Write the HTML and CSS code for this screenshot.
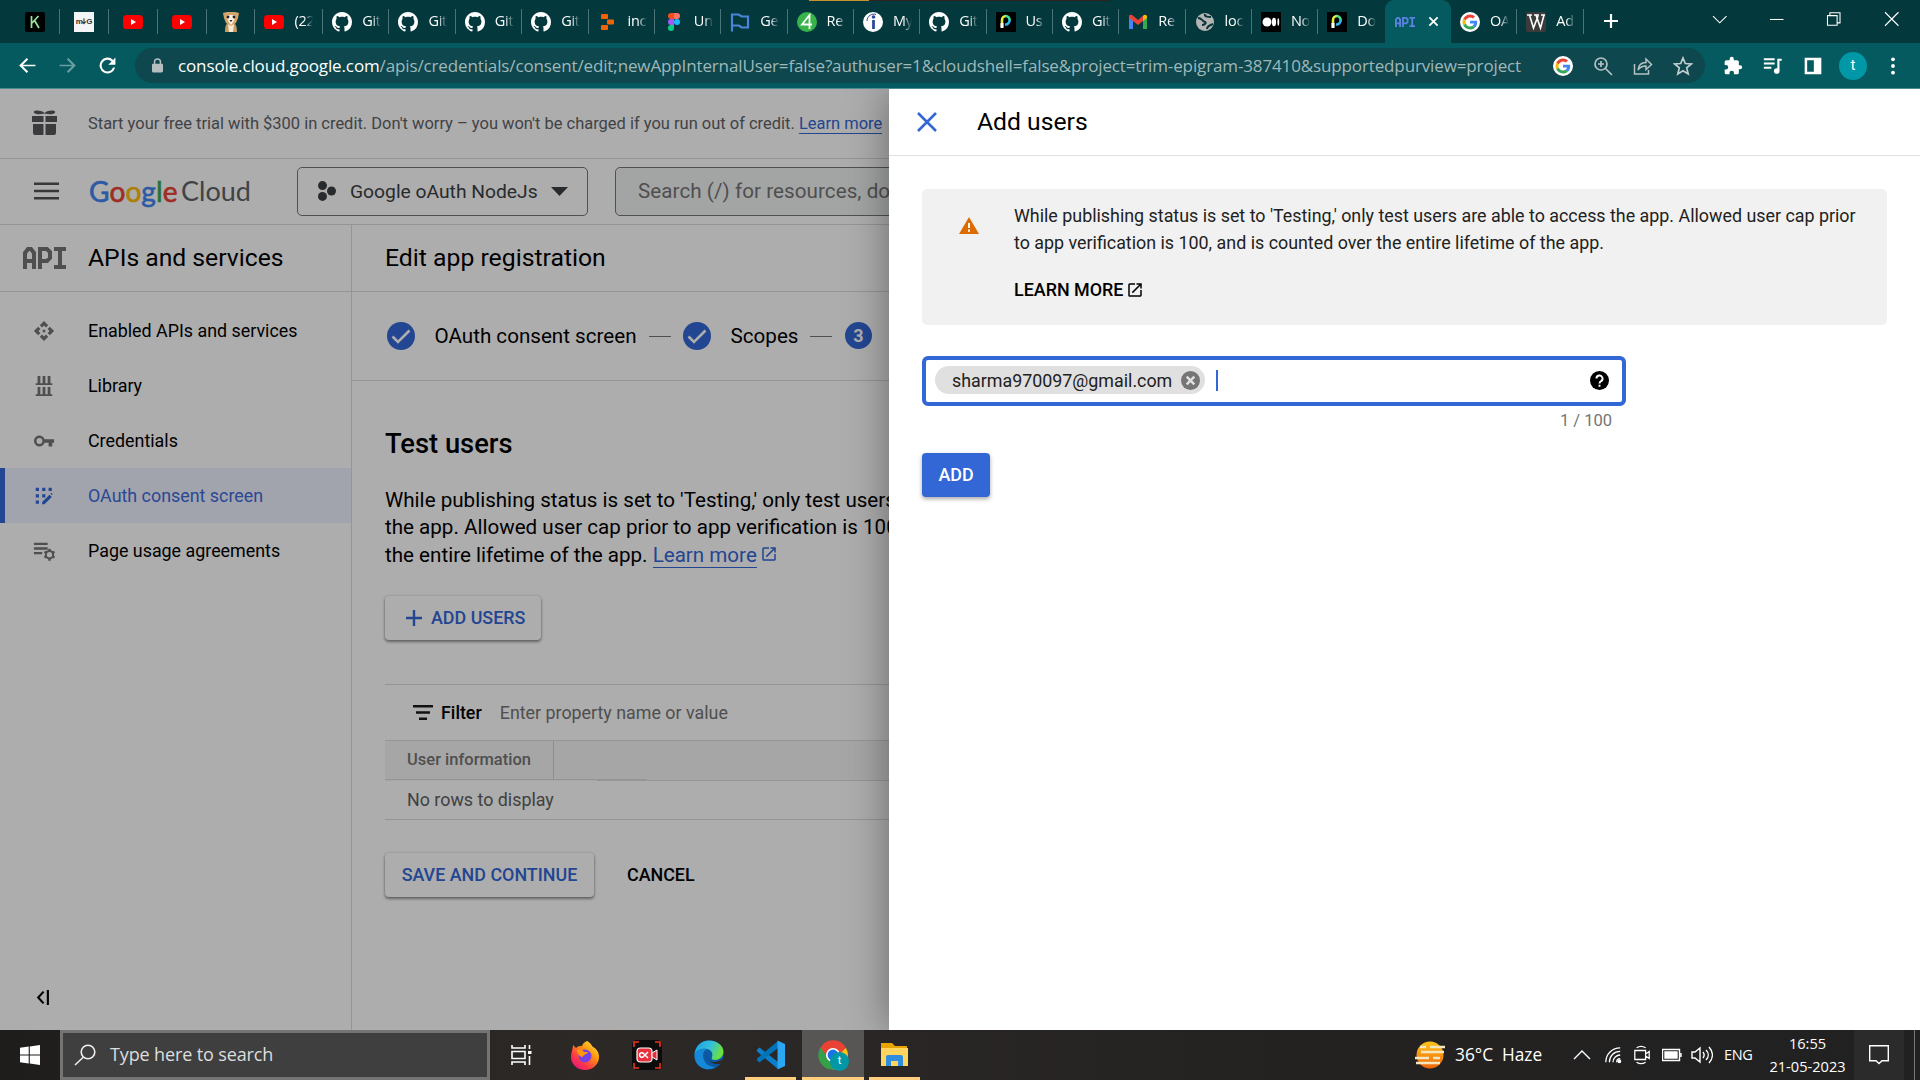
FILE: index.html
```html
<!DOCTYPE html>
<html lang="en">
<head>
<meta charset="utf-8">
<title>Edit app registration – Google Cloud console</title>
<link rel="stylesheet" href="styles.css">
</head>
<body>
<svg class="defs" aria-hidden="true">
  <symbol id="yt" viewBox="0 0 20 20"><rect y="3" width="20" height="14" rx="3.6" fill="#f00"/><path d="M8 7l5 3-5 3z" fill="#fff"/></symbol>
  <symbol id="gh" viewBox="0 0 16 16"><path fill="#fff" d="M8 0C3.58 0 0 3.58 0 8c0 3.54 2.29 6.53 5.47 7.59.4.07.55-.17.55-.38 0-.19-.01-.82-.01-1.49-2.01.37-2.53-.49-2.69-.94-.09-.23-.48-.94-.82-1.13-.28-.15-.68-.52-.01-.53.63-.01 1.08.58 1.23.82.72 1.21 1.87.87 2.33.66.07-.52.28-.87.51-1.07-1.78-.2-3.64-.89-3.64-3.95 0-.87.31-1.59.82-2.15-.08-.2-.36-1.02.08-2.12 0 0 .67-.21 2.2.82.64-.18 1.32-.27 2-.27s1.36.09 2 .27c1.53-1.04 2.2-.82 2.2-.82.44 1.1.16 1.92.08 2.12.51.56.82 1.27.82 2.15 0 3.07-1.87 3.75-3.65 3.95.29.25.54.73.54 1.48 0 1.07-.01 1.93-.01 2.2 0 .21.15.46.55.38A8.01 8.01 0 0016 8c0-4.42-3.58-8-8-8z"/></symbol>
  <symbol id="goog" viewBox="0 0 48 48"><circle cx="24" cy="24" r="24" fill="#fff"/><g transform="translate(6 6) scale(.75)"><path fill="#ea4335" d="M24 9.500c3.540 0 6.710 1.220 9.210 3.600l6.850-6.850C35.900 2.380 30.470 0 24 0 14.620 0 6.510 5.380 2.560 13.220l7.980 6.190C12.430 13.720 17.740 9.500 24 9.500z"/><path fill="#4285f4" d="M46.980 24.550c0-1.570-.15-3.090-.38-4.550H24v9.020h12.940c-.58 2.960-2.260 5.480-4.780 7.180l7.730 6c4.510-4.180 7.090-10.360 7.090-17.650z"/><path fill="#fbbc05" d="M10.530 28.590c-.48-1.450-.76-2.990-.76-4.590s.27-3.140.76-4.590l-7.980-6.190C.92 16.460 0 20.120 0 24c0 3.880.92 7.540 2.560 10.780z"/><path fill="#34a853" d="M24 48c6.480 0 11.930-2.130 15.890-5.810l-7.730-6c-2.150 1.450-4.920 2.300-8.160 2.300-6.260 0-11.570-4.220-13.470-9.910l-7.980 6.190C6.510 42.620 14.620 48 24 48z"/></g></symbol>
  <symbol id="pdev" viewBox="0 0 20 20"><rect width="20" height="20" fill="#000"/><path d="M6 15V8a4 4 0 0 1 4-4" fill="none" stroke="#e9ec3c" stroke-width="2.600"/><path d="M9.500 4a4 4 0 0 1 4 5" fill="none" stroke="#3fe0a0" stroke-width="2.600"/><path d="M13.500 8a4 4 0 0 1-4.500 4.500" fill="none" stroke="#2fb8f0" stroke-width="2.600"/><path d="M6 11v5" stroke="#fff" stroke-width="3"/></symbol>
  <symbol id="open" viewBox="0 0 24 24"><path d="M19 19H5V5h7V3H5a2 2 0 0 0-2 2v14a2 2 0 0 0 2 2h14c1.100 0 2-.9 2-2v-7h-2v7zM14 3v2h3.590l-9.830 9.830 1.410 1.410L19 6.410V10h2V3h-7z"/></symbol>
  <symbol id="apilogo" viewBox="0 0 43 22"><g fill="none" stroke="currentColor" stroke-width="4"><path d="M2 22V6l3-4h3l3 4v16M2 14h9M17 22V2h7l3 3v6l-3 3h-7M31 2h12M31 20h12M37 2v18"/></g></symbol>
  <symbol id="done" viewBox="0 0 28 28"><circle cx="14" cy="14" r="14" fill="#3367d6"/><path d="M5.500 14.500l5.500 5.500L22.500 8.500" fill="none" stroke="#fff" stroke-width="2.600"/></symbol>
</svg>

<header class="browser">
  <div class="tabstrip">
    <div class="window-edge"></div>
    <div class="tab pinned"><svg viewBox="0 0 20 20"><rect width="20" height="20" rx="2" fill="#000"/><path d="M6.500 4v12M13.500 4l-6.500 7M9.500 8.500l4.500 7.500" stroke="#9be59b" stroke-width="1.700" fill="none"/></svg></div>
    <div class="tab pinned"><span class="mg">m<svg viewBox="0 0 5 8"><path d="M2.500 0v6M.3 4l2.200 2.600L4.700 4" fill="none" stroke="#333" stroke-width="1.300"/></svg>G</span></div>
    <div class="tab pinned"><svg><use href="#yt"/></svg></div>
    <div class="tab pinned"><svg><use href="#yt"/></svg></div>
    <div class="tab pinned"><svg viewBox="0 0 20 20"><path d="M4 20c0-6 1-8 3-9h6c2 1 3 4 3 9z" fill="#c79a63"/><path d="M7 12h6l-1 8H8z" fill="#f4ead6"/><path d="M2 1l4-1h8l4 1-1 5-2 5-5 3-5-3-2-5z" fill="#d5a66b"/><path d="M6 3h8l-1 6-3 4-3-4z" fill="#f7efe0"/><circle cx="7" cy="5" r="1.400" fill="#222"/><circle cx="13" cy="5" r="1.400" fill="#222"/><path d="M8.500 8h3L10 10z" fill="#222"/></svg></div>
    <div class="tab first"><svg><use href="#yt"/></svg><span>(22</span></div>
    <div class="tab"><svg><use href="#gh"/></svg><span>Git</span></div>
    <div class="tab"><svg><use href="#gh"/></svg><span>Git</span></div>
    <div class="tab"><svg><use href="#gh"/></svg><span>Git</span></div>
    <div class="tab"><svg><use href="#gh"/></svg><span>Git</span></div>
    <div class="tab"><svg viewBox="0 0 20 20"><g fill="#f26207"><rect x="3" y="2" width="7" height="5" rx="1"/><rect x="9" y="7.500" width="7" height="5" rx="1"/><rect x="3" y="13" width="7" height="5" rx="1"/></g></svg><span>inc</span></div>
    <div class="tab"><svg viewBox="0 0 20 20"><path d="M4 4a3 3 0 0 1 3-3h3v6H7a3 3 0 0 1-3-3z" fill="#f24e1e"/><path d="M10 1h3a3 3 0 0 1 0 6h-3z" fill="#ff7262"/><path d="M7 7h3v6H7a3 3 0 0 1 0-6z" fill="#a259ff"/><circle cx="13" cy="10" r="3" fill="#1abcfe"/><path d="M7 13h3v3a3 3 0 1 1-3-3z" fill="#0acf83"/></svg><span>Un</span></div>
    <div class="tab"><svg viewBox="0 0 20 20"><path d="M2 19.500V2.500h6c2 0 2 2 4.500 2H18v11h-5.500c-2 0-2-2-4.500-2H2" fill="none" stroke="#4b84d6" stroke-width="2.200"/></svg><span>Ge</span></div>
    <div class="tab"><svg viewBox="0 0 20 20"><circle cx="10" cy="10" r="10" fill="#37b34a"/><path d="M12.500 17V3L5 12.500h10" fill="none" stroke="#fff" stroke-width="1.800"/></svg><span>Re</span></div>
    <div class="tab"><svg viewBox="0 0 20 20"><circle cx="10" cy="10" r="10" fill="#fff"/><circle cx="10.500" cy="5" r="1.800" fill="#2b4a9b"/><path d="M10.500 8v9" stroke="#2b4a9b" stroke-width="2.800"/><path d="M4 9c0-5 5-8 9-6.500" stroke="#2b4a9b" fill="none"/></svg><span>My</span></div>
    <div class="tab"><svg><use href="#gh"/></svg><span>Git</span></div>
    <div class="tab"><svg><use href="#pdev"/></svg><span>Us</span></div>
    <div class="tab"><svg><use href="#gh"/></svg><span>Git</span></div>
    <div class="tab"><svg viewBox="0 0 20 20"><path d="M1 4v13h4V8" fill="#4285f4"/><path d="M15 8v9h4V4" fill="#34a853"/><path d="M1 4c1-2 3-1 4-.3L10 8l5-4.300V9l-5 4-5-4-4-3z" fill="#ea4335"/><path d="M15 3.700C17 2 19 3 19 5v1l-4 3z" fill="#fbbc04"/></svg><span>Re</span></div>
    <div class="tab"><svg viewBox="0 0 20 20"><circle cx="10" cy="10" r="9" fill="#b4b4b4"/><path d="M3 6c4 0 4 3 7 4 2 1-1 3-3 3M10 2c-1 3 4 3 6 3M12 17c0-3 3-4 6-5" stroke="#06363b" stroke-width="2" fill="none"/></svg><span>loc</span></div>
    <div class="tab"><svg viewBox="0 0 20 20"><rect width="20" height="20" rx="1" fill="#000"/><circle cx="6" cy="10" r="4.500" fill="#fff"/><ellipse cx="13" cy="10" rx="2.100" ry="4.300" fill="#fff"/><ellipse cx="17.300" cy="10" rx=".9" ry="3.800" fill="#fff"/></svg><span>No</span></div>
    <div class="tab before"><svg><use href="#pdev"/></svg><span>Do</span></div>
    <div class="tab active"><svg><use href="#apilogo"/></svg><svg class="close" viewBox="0 0 12 12"><path d="M1.500 1.500l9 9M10.500 1.500l-9 9" stroke="#fff" stroke-width="2"/></svg></div>
    <div class="tab"><svg><use href="#goog"/></svg><span>OA</span></div>
    <div class="tab"><svg viewBox="0 0 20 20"><rect width="20" height="20" rx="2" fill="#3b3b3b"/><path d="M1 3h5M8 3h5M15 3h4M3.500 3l4 13L12 4M10 3l4.500 13L18 3" fill="none" stroke="#fff" stroke-width="1.600"/></svg><span>Ad</span></div>
    <svg class="newtab" viewBox="0 0 16 16"><path d="M8 1v14M1 8h14" stroke="#fff" stroke-width="2.200"/></svg>
    <div class="winctl">
      <svg viewBox="0 0 14 14"><path d="M0 4l7 7 7-7"/></svg>
      <svg viewBox="0 0 14 14"><path d="M0 7.500h14"/></svg>
      <svg viewBox="0 0 14 14"><path d="M.5 3.500h10v10h-10zM3 3V.5h10.500v10.500H11"/></svg>
      <svg viewBox="0 0 14 14"><path d="M0 0l14 14M14 0L0 14"/></svg>
    </div>
  </div>
  <div class="toolbar">
    <svg class="nav" viewBox="0 0 24 24"><path fill="#fff" d="M22 10.900H6.200l6.600-6.600L11 2.600 1.500 12 11 21.400l1.800-1.700-6.600-6.600H22z"/></svg>
    <svg class="nav" viewBox="0 0 24 24"><path fill="#6a9fa2" d="M2 10.900h15.800l-6.600-6.600L13 2.600 22.500 12 13 21.400l-1.800-1.700 6.600-6.600H2z"/></svg>
    <svg class="nav" viewBox="0 0 24 24"><path fill="#fff" d="M19.100 4.900A10 10 0 1 0 21.700 14.600h-2.700A7.400 7.400 0 1 1 17.200 6.800L13 11h9V2z"/></svg>
    <div class="omnibox">
      <svg class="lock" viewBox="0 0 12 16"><path fill="#b6bec0" d="M10.500 6H10V4a4 4 0 0 0-8 0v2h-.5A1.300 1.300 0 0 0 0 7.300v6.900A1.500 1.500 0 0 0 1.500 15.500h9a1.500 1.500 0 0 0 1.500-1.500V7.300A1.300 1.300 0 0 0 10.500 6zM3.600 6V4a2.400 2.400 0 0 1 4.800 0v2z"/></svg>
      <div class="url"><span>console.cloud.google.com</span><span class="path">/apis/credentials/consent/edit;newAppInternalUser=false?authuser=1&amp;cloudshell=false&amp;project=trim-epigram-387410&amp;supportedpurview=project</span></div>
      <div class="omni-icons">
        <svg><use href="#goog"/></svg>
        <svg viewBox="0 0 20 20"><g fill="none" stroke="#b5c1c3" stroke-width="1.700"><circle cx="8" cy="8" r="6"/><path d="M12.500 12.500L19 19M8 5v6M5 8h6"/></g></svg>
        <svg viewBox="0 0 20 20"><path d="M1.500 8v10h14v-4M5 14c.5-5 3-7.500 8-7.500V3l5.500 5.500-5.500 5V10c-4 0-6 1-8 4z" fill="none" stroke="#b5c1c3" stroke-width="1.500"/></svg>
        <svg viewBox="0 0 20 20"><path d="M10 2l2.300 5.500 6 .5-4.600 3.900L15.200 18 10 14.700 4.800 18l1.500-6.100L1.700 8l6-.5z" fill="none" stroke="#c3cdce" stroke-width="1.700"/></svg>
      </div>
    </div>
    <div class="ext">
      <svg viewBox="0 0 24 24"><path fill="#fff" d="M20.500 11H19V7a2 2 0 0 0-2-2h-4V3.500a2.500 2.500 0 0 0-5 0V5H4a2 2 0 0 0-2 2v3.800h1.500a2.700 2.700 0 0 1 0 5.400H2V20a2 2 0 0 0 2 2h3.800v-1.500a2.700 2.700 0 0 1 5.400 0V22H17a2 2 0 0 0 2-2v-4h1.500a2.500 2.500 0 0 0 0-5z"/></svg>
      <svg viewBox="0 0 24 24"><path d="M1 4h13M1 9h13M1 14h9" stroke="#fff" stroke-width="2.400"/><path d="M22.500 4.500h-4V17" stroke="#fff" stroke-width="2.600" fill="none"/><circle cx="16.500" cy="18" r="3.400" fill="#fff"/></svg>
      <svg viewBox="0 0 24 24"><path d="M2 2h20v20H2zM5 5v14h8V5z" fill="#fff" fill-rule="evenodd"/></svg>
      <span class="avatar">t</span>
      <svg viewBox="0 0 24 24"><g fill="#fff"><circle cx="12" cy="4" r="2.300"/><circle cx="12" cy="12" r="2.300"/><circle cx="12" cy="20" r="2.300"/></g></svg>
    </div>
  </div>
</header>

<main class="viewport">
  <div class="console">
    <div class="promo">
      <svg class="gift" viewBox="0 0 25 25"><g fill="#57585a"><path d="M0 6h11.500v6H0zM13.500 6H25v6H13.500zM1 14h10.500v11H3a2 2 0 0 1-2-2zM13.500 14H24v9a2 2 0 0 1-2 2h-8.500z"/><path d="M12.500 3C9 0 3 0 2 1.500 1 4 6 5 12.500 3.500 19 5 24 4 23 1.500 22 0 16 0 12.500 3z"/></g></svg>
      <p>Start your free trial with $300 in credit. Don't worry – you won't be charged if you run out of credit. <a>Learn more</a></p>
    </div>
    <div class="topbar">
      <svg class="burger" viewBox="0 0 26 18"><path d="M0 1.500h26M0 9h26M0 16.500h26" stroke="#505356" stroke-width="2.600"/></svg>
      <div class="logo"><span class="word"><i class="b">G</i><i class="r">o</i><i class="y">o</i><i class="b">g</i><i class="g">l</i><i class="r">e</i></span><span class="cloud">Cloud</span></div>
      <div class="project">
        <svg class="hex" viewBox="0 0 18 20"><g fill="#3c4043"><circle cx="4.500" cy="4.600" r="4.500"/><circle cx="13.500" cy="10" r="4.500"/><circle cx="4.500" cy="15.400" r="4.500"/></g></svg>
        <span>Google oAuth NodeJs</span>
        <svg class="caret" viewBox="0 0 17 9"><path d="M0 0h17L8.500 9z" fill="#3c4043"/></svg>
      </div>
      <div class="search">Search (/) for resources, docs</div>
    </div>
    <div class="columns">
      <nav class="side">
        <div class="side-head"><svg class="api" viewBox="0 0 43 22"><use href="#apilogo"/></svg><h2>APIs and services</h2></div>
        <ul>
          <li><svg viewBox="0 0 24 24"><path d="M14 12l-2 2-2-2 2-2 2 2zm-2-6l2.120 2.120 2.500-2.500L12 1 7.380 5.620l2.500 2.500L12 6zm-6 6l2.120-2.120-2.500-2.500L1 12l4.620 4.620 2.500-2.500L6 12zm12 0l-2.120 2.120 2.500 2.500L23 12l-4.620-4.620-2.500 2.500L18 12zm-6 6l-2.120-2.120-2.500 2.500L12 23l4.620-4.620-2.500-2.500L12 18z"/></svg><span>Enabled APIs and services</span></li>
          <li><svg viewBox="0 0 24 24"><path d="M5 1h3v8h2.500V1h3v8H16V1h3v8h2v2H3V9h2zM5 13h3v8h2.500v-8h3v8H16v-8h3v8h2v2H3v-2h2z"/></svg><span>Library</span></li>
          <li><svg viewBox="0 0 24 24"><path d="M12.650 10A6 6 0 1 0 12.650 14H17v4h4v-4h2v-4zM7 15.200a3.200 3.200 0 1 1 0-6.400 3.200 3.200 0 0 1 0 6.400z" fill-rule="evenodd"/></svg><span>Credentials</span></li>
          <li class="sel"><svg viewBox="0 0 24 24"><path d="M3 3h3.500v3.500H3zM10 3h3.500v3.500H10zM17 3h3.500v3.500H17zM3 10h3.500v3.500H3zM10 10h3.500v3.500H10zM3 17h3.500v3.500H3z"/><path d="M10 21v-2.500l8-8 2.500 2.500-8 8zM19 9.500l1-1 1.500 1.500-1 1z"/></svg><span>OAuth consent screen</span></li>
          <li><svg viewBox="0 0 24 24"><path d="M1 3h15v2.500H1zM1 8h15v2.500H1zM1 13h9v2.500H1z"/><circle cx="18" cy="16" r="4" fill="none" stroke="currentColor" stroke-width="2.200"/><path d="M18 9.500v2.500M18 20v2.500M12.500 12.800l2 1.200M21.500 18l2 1.200M12.500 19.200l2-1.200M21.500 14l2-1.200" stroke="currentColor" stroke-width="2.600"/></svg><span>Page usage agreements</span></li>
        </ul>
        <svg class="collapse" viewBox="0 0 12 14"><path d="M7 1.500L2 7l5 5.500M11 0v14" fill="none" stroke="#000" stroke-width="2"/></svg>
      </nav>
      <section class="content">
        <h1 class="bar">Edit app registration</h1>
        <div class="steps">
          <svg><use href="#done"/></svg><span>OAuth consent screen</span><hr>
          <svg><use href="#done"/></svg><span>Scopes</span><hr>
          <b class="num">3</b>
        </div>
        <div class="body">
          <h3>Test users</h3>
          <p>While publishing status is set to 'Testing,' only test users<br>the app. Allowed user cap prior to app verification is 100,<br>the entire lifetime of the app. <a>Learn more</a><svg class="ext-ic"><use href="#open"/></svg></p>
          <button class="raised add"><svg viewBox="0 0 16 16"><path d="M8 0v16M0 8h16" stroke="currentColor" stroke-width="2.400"/></svg><span>ADD USERS</span></button>
          <div class="table">
            <div class="filter"><svg viewBox="0 0 20 15"><path d="M0 1.300h20M3 7.500h14M6 13.700h8" stroke="#1b1b1b" stroke-width="2.600"/></svg><b>Filter</b><span>Enter property name or value</span></div>
            <div class="thead"><div class="th">User information</div><div class="rest"><i></i></div></div>
            <div class="tr">No rows to display</div>
          </div>
          <div class="actions"><button class="raised save">SAVE AND CONTINUE</button><button class="flat">CANCEL</button></div>
        </div>
      </section>
    </div>
  </div>
  <div class="scrim"></div>
  <aside class="panel">
    <div class="panel-head"><svg viewBox="0 0 20 20"><path d="M1 1l18 18M19 1L1 19" stroke="#3367d6" stroke-width="2.600"/></svg><h2>Add users</h2></div>
    <div class="panel-body">
      <div class="notice">
        <svg class="warn" viewBox="0 0 20 17"><path d="M10 0l10 17H0z" fill="#dd6b00"/><path d="M10 6v5M10 12.500v2.200" stroke="#fff" stroke-width="1.900"/></svg>
        <div><p>While publishing status is set to 'Testing,' only test users are able to access the app. Allowed user cap prior<br>to app verification is 100, and is counted over the entire lifetime of the app.</p>
        <a><span>LEARN MORE</span><svg><use href="#open"/></svg></a></div>
      </div>
      <div class="field">
        <span class="chip"><span>sharma970097@gmail.com</span><svg viewBox="0 0 20 20"><circle cx="10" cy="10" r="10" fill="#757575"/><path d="M6 6l8 8M14 6l-8 8" stroke="#e0e0e0" stroke-width="2.600"/></svg></span>
        <span class="cursor"></span>
        <svg class="help" viewBox="0 0 20 20"><circle cx="10" cy="10" r="10"/><path d="M6.800 8a3.200 3.200 0 1 1 4.800 2.700C10.300 11.500 10 12 10 13.200M10 14.500v2.200" fill="none" stroke="#fff" stroke-width="2"/></svg>
      </div>
      <div class="count">1 / 100</div>
      <button class="primary">ADD</button>
    </div>
  </aside>
</main>

<footer class="taskbar">
  <div class="start"><svg viewBox="0 0 20 20"><path fill="#fff" d="M0 2.800l8.700-1.200v8H0zM9.800 1.400L20 0v9.600H9.800zM0 10.500h8.700v8L0 17.300zM9.800 10.500H20V20L9.800 18.600z"/></svg></div>
  <div class="tsearch"><svg viewBox="0 0 22 22"><circle cx="14" cy="8" r="6.800" fill="none" stroke="#eee" stroke-width="1.600"/><path d="M9.500 13L1 21" stroke="#eee" stroke-width="1.600"/></svg><span>Type here to search</span></div>
  <div class="apps">
    <div class="app tv"><svg viewBox="0 0 22 22"><path d="M1 1v3h13V1M1 21v-3h13v3M1 7.500h13v7H1zM18.500 1v4M18.500 12v9" fill="none" stroke="#fff" stroke-width="1.600"/><path d="M17 7h3.500v3H17z" fill="#fff"/></svg></div>
    <div class="app"><svg viewBox="0 0 30 30"><defs><linearGradient id="ff" x1="1" y1="0" x2=".2" y2="1"><stop offset="0" stop-color="#fff44f"/><stop offset=".4" stop-color="#ff980e"/><stop offset=".75" stop-color="#ff3647"/><stop offset="1" stop-color="#e31587"/></linearGradient></defs><path d="M17 1c4 2 5 5 6 6 4 2 6 6 6 10a14 13 0 0 1-28 0C1 12 3 9 3 5l3 3c2-2 4-2 6-2 1-3 3-4 5-5z" fill="url(#ff)"/><circle cx="15" cy="16" r="6.500" fill="#7542e5"/><path d="M7 10c3-1 6 0 7 2h4c-1 3-5 2-5 5-3 0-6-3-6-7z" fill="#ff980e"/></svg></div>
    <div class="app"><svg viewBox="0 0 30 30"><rect width="30" height="30" rx="5" fill="#0c0c0c"/><path d="M2 7V2h5M23 2h5v5M28 23v5h-5M7 28H2v-5" stroke="#e32" stroke-width="1.600" fill="none"/><rect x="5" y="8" width="15" height="14" rx="3.500" fill="#e8303c" stroke="#fff" stroke-width="1.200"/><path d="M20 13l5-3v10l-5-3z" fill="#e8303c" stroke="#fff"/><path d="M16 12l-5 5a2.300 2.300 0 1 1 0-4l5 5" stroke="#fff" stroke-width="1.500" fill="none"/></svg></div>
    <div class="app"><svg viewBox="0 0 30 30"><defs><linearGradient id="ed" x2="1" y2=".3"><stop offset="0" stop-color="#1b9de2"/><stop offset=".6" stop-color="#35c1d9"/><stop offset="1" stop-color="#6be03e"/></linearGradient></defs><circle cx="15" cy="15" r="14.500" fill="#0c59a4"/><path d="M.5 15C1 6 7 .5 15 .5c9 0 15 6 14.500 12C29 17 25 20 21 20c-3 0-4-1-3-3 1-3 0-7-5-8C7 8 2 11 .5 15z" fill="url(#ed)"/><path d="M.5 15C2 10 8 8 13 9c-4 2-5 7-3 11 2 5 7 7 11 7-9 6-21-1-20.500-12z" fill="#1688d8"/><path d="M13 15c-1 5 5 9 12 6l4-2 1 3-4 2c-7 1-13-3-13-9z" fill="#2d2a28"/></svg></div>
    <div class="app on"><svg viewBox="0 0 30 30"><path d="M1 9.500L3.500 7.500 22 22V29L1 11.500z" fill="#0a7fcb"/><path d="M1 20.500L3.500 22.500 22 8V1L1 18.500z" fill="#0072ba"/><path d="M21.500.5L29 4v22l-7.500 3.500z" fill="#2aa6f2"/></svg></div>
    <div class="app on current"><svg viewBox="0 0 30 30"><path d="M15 15L2.500 7.500A14.500 14.500 0 0 1 28 8z" fill="#ea4335"/><path d="M15 15L28 8a14.500 14.500 0 0 1-13 21.500z" fill="#fbc116"/><path d="M2.500 7.500A14.500 14.500 0 0 0 15 29.500L21 18z" fill="#34a04a"/><path d="M2.500 7.500h25.400L21 15H8z" fill="#ea4335"/><circle cx="15" cy="15" r="7" fill="#fff"/><circle cx="15" cy="15" r="5.400" fill="#1a73e8"/></svg><span class="badge">t</span></div>
    <div class="app on"><svg viewBox="0 0 30 30"><path d="M1 3h11l3 3h12v4H1z" fill="#e8a400"/><path d="M1 8h27v18H1z" fill="#ffd55e"/><path d="M6 26V17a2 2 0 0 1 2-2h13a2 2 0 0 1 2 2v9h-5v-5h-7v5z" fill="#2f8de0"/></svg></div>
  </div>
  <div class="tray">
    <svg class="haze" viewBox="0 0 30 28"><defs><linearGradient id="hz" x2="0" y2="1"><stop offset="0" stop-color="#fcc419"/><stop offset="1" stop-color="#f0640c"/></linearGradient></defs><circle cx="15" cy="14" r="13.500" fill="url(#hz)"/><path d="M5 6h6M15 6h15M6 11h23M0 17h14M18 17h7M1 22h24" stroke="#f6e6bd" stroke-width="2.600"/></svg>
    <span class="weather">36°C&nbsp; Haze</span>
    <svg class="ic up" viewBox="0 0 20 20"><path d="M2 14l8-8 8 8"/></svg>
    <svg class="ic wifi" viewBox="0 0 20 20"><path d="M2 18C2 9 9 2 18 2M6 18C6 11 11 6 18 6M10 18c0-5 4-8 8-8M14 18c0-2.500 2-4 4-4"/><circle cx="17" cy="17" r="1.500" fill="#fff"/></svg>
    <svg class="ic cam" viewBox="0 0 20 20"><path d="M2 5h12v10H2zM14 9l4-3v8l-4-3M4 2c3-2 7-2 10 0M4 18c3 2 7 2 10 0"/></svg>
    <svg class="ic bat" viewBox="0 0 20 20"><path d="M.5 4.500h17v11H.5zM19 8v4"/><path d="M3 7h12v6H3z" fill="#fff"/></svg>
    <svg class="ic spk" viewBox="0 0 22 20"><path d="M1 7h3l5-4v14l-5-4H1zM12 7c1.500 2 1.500 4 0 6M15 5c3 3 3 7 0 10M18 2c4.500 5 4.500 11 0 16"/></svg>
    <span class="lang">ENG</span>
    <div class="clock"><span>16:55</span><span>21-05-2023</span></div>
    <div class="notif"><svg class="ic" viewBox="0 0 20 20"><path d="M.7.700h18.600v15h-6.300L10 18.500l-3-2.800H.7z"/></svg></div>
    <i class="peek"></i>
  </div>
</footer>
</body>
</html>
```
FILE: styles.css
```css
* { box-sizing: border-box; }
body { margin: 0; width: 1920px; height: 1080px; overflow: hidden; display: flex; flex-direction: column; font-family: Roboto, "Liberation Sans", sans-serif; color: #000; background: #fff; }
h1, h2, h3, p, ul { margin: 0; padding: 0; font-weight: 400; }
ul { list-style: none; }
svg { flex: none; display: block; }
button { font: inherit; border: 0; padding: 0; background: none; }
.defs { position: absolute; width: 0; height: 0; }

/* browser chrome */
.browser { height: 89px; flex: none; background: #045a5f; border-bottom: 1px solid #4e8a8d; font-family: "Open Sans", "Noto Sans", sans-serif; color: #fff; }
.tabstrip { position: relative; height: 43px; background: #03383d; display: flex; padding-left: 11px; }
.window-edge { position: absolute; left: 809px; top: 0; width: 301px; height: 1px; background: linear-gradient(90deg, #c8922c 60px, #2b2420 60px); }
.tab { width: 66.350px; height: 43px; display: flex; align-items: center; gap: 10px; padding-left: 9px; position: relative; flex: none; }
.tab.first { width: 67.700px; }
.tab::after { content: ""; position: absolute; right: 0; top: 9px; width: 1px; height: 25px; background: #4b7478; }
.tab svg { width: 20px; height: 20px; }
.tab > span { margin-top: -2px; width: 20px; white-space: nowrap; font-size: 14.5px; letter-spacing: -.3px; -webkit-mask-image: linear-gradient(90deg, #000 50%, transparent 95%); mask-image: linear-gradient(90deg, #000 50%, transparent 95%); }
.tab.pinned { width: 48.900px; padding-left: 14px; }
.tab > .mg { margin: 0; width: 20px; height: 20px; background: #f3f5f6; color: #333; font: bold 8px/20px "Liberation Sans", sans-serif; letter-spacing: -.5px; -webkit-mask-image: none; mask-image: none; display: flex; align-items: center; justify-content: center; }
.mg svg { width: 4px; height: 7px; }
.tab.before::after, .tab.active::after { display: none; }
.tab.active { background: #045a5f; border-radius: 9px 9px 0 0; color: #5a83e0; gap: 13px; padding-left: 10px; }
.tab .close { width: 11px; height: 11px; }
.newtab { width: 16px; height: 16px; margin: 13px 0 0 19px; }
.winctl { margin-left: auto; display: flex; gap: 43.700px; padding: 12px 22px 0 0; }
.winctl svg { width: 13.500px; height: 14px; fill: none; stroke: #fff; stroke-width: 1.100; overflow: visible; }
.toolbar { height: 45px; display: flex; align-items: center; padding-left: 18px; }
.nav { width: 19px; height: 19px; margin-right: 21px; }
.omnibox { width: 1570px; height: 35px; margin-left: -3px; border-radius: 18px; background: #0e474d; display: flex; align-items: center; padding: 0 12px 0 17px; }
.lock { width: 11px; height: 15px; }
.url { margin-left: 15px; font-size: 17px; letter-spacing: -.130px; white-space: nowrap; width: 1370px; }
.path { color: #9fb8ba; }
.omni-icons { display: flex; gap: 20px; margin-left: auto; }
.omni-icons svg { width: 20px; height: 20px; }
.ext { display: flex; align-items: center; gap: 20px; margin-left: 18px; }
.ext svg { width: 20px; height: 20px; }
.avatar { width: 28px; height: 28px; border-radius: 50%; background: #0097a7; text-align: center; font: 15px/27px Roboto, sans-serif; margin: 0 -4px; }

/* console page */
.viewport { position: relative; height: 941px; overflow: hidden; flex: none; }
.console { height: 941px; display: flex; flex-direction: column; }
.console a { color: #3367d6; border-bottom: 1px solid #3367d6; }
.promo { height: 70px; border-bottom: 1px solid #dcdcdc; display: flex; align-items: center; padding-left: 32px; flex: none; }
.gift { width: 25px; height: 25px; margin-right: 31px; margin-top: -2px; }
.promo p { font-size: 16.480px; color: #5f6368; white-space: nowrap; }
.topbar { height: 66px; border-bottom: 1px solid #dcdcdc; display: flex; align-items: center; padding-left: 34px; flex: none; }
.burger { width: 25px; height: 18px; margin-top: -1px; }
.logo { width: 207px; margin: -2px 0 0 30px; display: flex; align-items: center; gap: 6px; font: 27px Lato, sans-serif; }
.logo .word { width: 86px; font-size: 28px; -webkit-text-stroke: .6px; letter-spacing: .1px; }
.logo i { font-style: normal; -webkit-text-stroke-color: currentColor; }
.logo .cloud { color: #5f6368; }
.logo .b { color: #4285f4; } .logo .r { color: #ea4335; } .logo .y { color: #fbbc04; } .logo .g { color: #34a853; }
.project { width: 291px; height: 49px; margin-left: 1px; border: 1px solid #747679; border-radius: 5px; display: flex; align-items: center; padding: 0 0 1px 20px; color: #3c4043; font-size: 19.250px; white-space: nowrap; flex: none; }
.hex { width: 18px; height: 20px; margin-right: 14px; }
.caret { width: 17px; height: 9px; margin-left: 13px; }
.search { width: 700px; height: 49px; margin-left: 27px; border: 1px solid #747679; border-radius: 5px; background: #f1f3f4; color: #757575; font-size: 20.625px; letter-spacing: .060px; line-height: 47px; padding-left: 22px; white-space: nowrap; flex: none; }
.columns { display: flex; flex: 1; min-height: 0; }
.side { width: 352px; border-right: 1px solid #dcdcdc; display: flex; flex-direction: column; flex: none; }
.side-head { height: 67px; border-bottom: 1px solid #dcdcdc; display: flex; align-items: center; padding-left: 23px; color: #757575; }
.api { width: 43px; height: 22px; margin-right: 22px; }
.side-head h2 { font-size: 24.700px; color: #000; margin-top: -2px; }
.side ul { padding-top: 11px; }
.side li { height: 55px; display: flex; align-items: center; padding-left: 33px; gap: 33px; font-size: 17.875px; color: #000; }
.side li svg { width: 22px; height: 22px; fill: #757575; color: #757575; }
.side li.sel { background: #eef2ff; border-left: 5px solid #3367d6; padding-left: 28px; color: #3f6bdb; }
.side li.sel svg { fill: #3367d6; }
.collapse { width: 13px; height: 15px; margin: auto 0 25px 36px; }
.content { flex: 1; }
.bar { height: 67px; border-bottom: 1px solid #dcdcdc; padding-left: 33px; font-size: 24.750px; line-height: 66px; }
.steps { height: 89px; border-bottom: 1px solid #dcdcdc; display: flex; align-items: center; padding-left: 35px; font-size: 20.625px; white-space: nowrap; }
.steps svg { width: 28px; height: 28px; margin-right: 19.500px; }
.steps hr { width: 22px; height: 1px; border: 0; margin: 0 12.500px 0 12px; background: #757575; }
.num { width: 27px; height: 27px; border-radius: 50%; background: #3367d6; color: #fff; font-size: 18px; line-height: 27px; text-align: center; margin-top: -1px; }
.body { padding: 45px 0 0 33px; }
.body h3 { font-size: 27.300px; font-weight: 500; line-height: 36px; }
.body p { margin-top: 24.500px; font-size: 20.600px; line-height: 27.500px; white-space: nowrap; }
.ext-ic { display: inline-block; width: 18px; height: 18px; margin-left: 3px; fill: #3367d6; vertical-align: -1px; }
.raised { height: 44px; border-radius: 4px; background: #fff; color: #3367d6; font-size: 17.900px; font-weight: 500; box-shadow: 0 2px 3px rgba(0,0,0,.4), 0 0 3px rgba(0,0,0,.2); display: flex; align-items: center; justify-content: center; padding-bottom: 1px; white-space: nowrap; }
.add { width: 156px; margin-top: 27px; gap: 9px; justify-content: flex-start; padding-left: 21px; }
.add svg { width: 16px; height: 16px; }
.table { margin-top: 44px; border-top: 1px solid #dcdcdc; }
.filter { height: 55px; display: flex; align-items: center; padding-left: 28px; font-size: 17.850px; color: #757575; }
.filter svg { width: 20px; height: 15px; }
.filter b { margin: 0 18px 0 8px; color: #000; font-weight: 500; }
.filter span { margin-top: -1px; }
.thead { height: 41px; border-top: 1px solid #dcdcdc; display: flex; background: #f5f5f5; font-size: 16.500px; font-weight: 500; color: #757575; }
.th { width: 169px; height: 39px; border-right: 1px solid #d2d2d2; border-bottom: 1px solid #dcdcdc; padding-left: 22px; line-height: 37px; }
.rest { flex: 1; height: 40px; background: linear-gradient(90deg, #dcdcdc 93px, transparent 93px) 0 38px / 100% 1px no-repeat, linear-gradient(90deg, transparent 43px, #dcdcdc 43px) 0 39px / 100% 1px no-repeat; }
.tr { height: 39px; border-bottom: 1px solid #dcdcdc; padding-left: 22px; line-height: 37px; font-size: 17.875px; color: #616161; }
.actions { display: flex; margin-top: 33px; }
.save { width: 209px; }
.flat { margin-left: 33px; font-size: 17.875px; font-weight: 500; height: 44px; padding-bottom: 1px; }
.scrim { position: absolute; inset: 0; background: rgba(0,0,0,.32); }

/* side panel */
.panel { position: absolute; left: 889px; top: 0; width: 1031px; height: 941px; background: #fff; box-shadow: 0 0 40px rgba(0,0,0,.4); }
.panel-head { height: 67px; border-bottom: 1px solid #e0e0e0; display: flex; align-items: center; padding-left: 28px; gap: 40px; }
.panel-head svg { width: 20px; height: 20px; }
.panel-head h2 { font-size: 24.700px; margin-top: -1px; }
.panel-body { padding: 33px; }
.notice { width: 965px; height: 136px; background: #f1f1f1; border-radius: 5px; display: flex; padding: 13px 0 0 37px; }
.warn { width: 20px; height: 17px; margin: 15px 35px 0 0; }
.notice p { font-size: 17.860px; line-height: 27px; color: #212121; white-space: nowrap; }
.notice a { display: flex; align-items: center; margin-top: 24px; font-size: 17.900px; line-height: 20px; font-weight: 500; gap: 3px; }
.notice a svg { width: 18px; height: 18px; }
.field { width: 704px; height: 50px; margin-top: 31px; border: 4px solid #3367d6; border-radius: 6px; display: flex; align-items: center; padding: 0 13px 2px 9px; }
.chip { width: 270px; height: 28px; border-radius: 14px; background: #e0e0e0; display: flex; align-items: center; justify-content: space-between; padding: 0 5px 0 17px; font-size: 17.850px; color: #212121; }
.chip svg { width: 19px; height: 19px; }
.cursor { width: 2px; height: 21px; margin-left: 11px; background: #3367d6; }
.help { width: 19px; height: 19px; margin-left: auto; }
.count { width: 690px; text-align: right; font-size: 16.500px; line-height: 19px; margin-top: 5px; color: #757575; }
.primary { margin-top: 23px; width: 68px; height: 44px; border-radius: 4px; background: #3367d6; color: #fff; font-size: 17.900px; font-weight: 500; box-shadow: 0 2px 4px rgba(0,0,0,.35); display: flex; align-items: center; justify-content: center; padding-bottom: 2px; }

/* taskbar */
.taskbar { height: 50px; flex: none; background: linear-gradient(90deg, #1f1d1c, #2c2927 30%, #242221 70%, #212121); display: flex; color: #fff; font-family: "Open Sans", "Noto Sans", sans-serif; }
.start { width: 60px; display: flex; align-items: center; justify-content: center; }
.start svg { width: 20px; height: 20px; }
.tsearch { width: 430px; background: #3f3f3f; border: 3px solid #747474; display: flex; align-items: center; padding-left: 11px; gap: 14px; font-size: 18px; letter-spacing: -.130px; color: #ddd; }
.tsearch svg { width: 22px; height: 22px; }
.tsearch span { margin-top: -2px; }
.apps { display: flex; margin-left: 2px; }
.app { width: 62px; position: relative; display: flex; align-items: center; justify-content: center; }
.app svg { width: 30px; height: 30px; }
.app.tv { width: 60px; } .app.tv svg { width: 22px; height: 22px; }
.app.tv + .app { margin-left: 2px; }
.app.on::after { content: ""; position: absolute; left: 5px; right: 6px; bottom: 0; height: 3px; background: #ffcf7d; }
.app.current { background: #585655; }
.app.current::after { left: 0; right: 0; }
.badge { position: absolute; left: 28px; top: 22px; width: 19px; height: 19px; border-radius: 50%; background: #0097a7; font: 11px/18px Roboto, sans-serif; text-align: center; }
.tray { margin-left: auto; display: flex; align-items: center; }
.haze { width: 30px; height: 28px; margin-right: 10px; }
.weather { width: 117px; font-size: 17.300px; margin-top: -2px; white-space: nowrap; }
.ic { fill: none; stroke: #fff; stroke-width: 1.400; width: 20px; height: 20px; }
.up { margin-right: 12px; } .wifi, .cam, .bat { margin-right: 11px; width: 18px; } .bat { width: 20px; margin-right: 9px; } .spk { width: 22px; margin-right: 11px; }
.lang { width: 32px; font-size: 14.500px; letter-spacing: -.400px; margin-top: -2px; }
.clock { width: 93px; margin-left: 5px; display: flex; flex-direction: column; align-items: center; font-size: 14.600px; line-height: 23px; }
.notif { width: 50px; height: 50px; background: #2b2b2c; display: flex; align-items: center; justify-content: center; }
.peek { width: 1px; height: 50px; background: #777; margin: 0 5px 0 10px; }
```
